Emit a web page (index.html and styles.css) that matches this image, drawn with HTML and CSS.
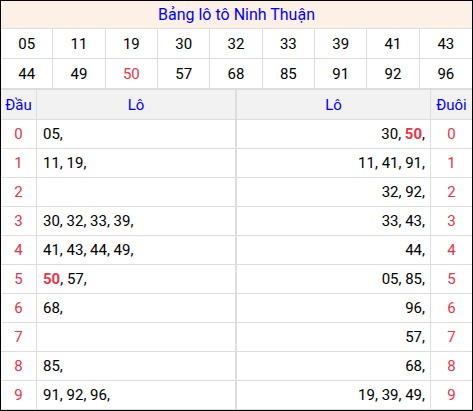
FILE: index.html
```html
<!DOCTYPE html>
<html lang="vi">
<head>
<meta charset="utf-8">
<title>Bảng lô tô Ninh Thuận</title>
<link rel="stylesheet" href="styles.css">
</head>
<body>
<div class="board">
  <div class="title">Bảng lô tô Ninh Thuận</div>
  <div class="nums">
    <div class="n">05</div><div class="n">11</div><div class="n">19</div><div class="n">30</div><div class="n">32</div><div class="n">33</div><div class="n">39</div><div class="n">41</div><div class="n">43</div>
    <div class="n">44</div><div class="n">49</div><div class="n red">50</div><div class="n">57</div><div class="n">68</div><div class="n">85</div><div class="n">91</div><div class="n">92</div><div class="n">96</div>
  </div>
  <div class="loto">
    <div class="h c1">Đầu</div><div class="h c2">Lô</div><div class="h c3">Lô</div><div class="h c4">Đuôi</div>

    <div class="d c1">0</div><div class="l c2">05,</div><div class="r c3">30, <b>50</b>,</div><div class="d c4">0</div>
    <div class="d c1">1</div><div class="l c2">11, 19,</div><div class="r c3">11, 41, 91,</div><div class="d c4">1</div>
    <div class="d c1">2</div><div class="l c2"></div><div class="r c3">32, 92,</div><div class="d c4">2</div>
    <div class="d c1">3</div><div class="l c2">30, 32, 33, 39,</div><div class="r c3">33, 43,</div><div class="d c4">3</div>
    <div class="d c1">4</div><div class="l c2">41, 43, 44, 49,</div><div class="r c3">44,</div><div class="d c4">4</div>
    <div class="d c1">5</div><div class="l c2"><b>50</b>, 57,</div><div class="r c3">05, 85,</div><div class="d c4">5</div>
    <div class="d c1">6</div><div class="l c2">68,</div><div class="r c3">96,</div><div class="d c4">6</div>
    <div class="d c1">7</div><div class="l c2"></div><div class="r c3">57,</div><div class="d c4">7</div>
    <div class="d c1">8</div><div class="l c2">85,</div><div class="r c3">68,</div><div class="d c4">8</div>
    <div class="d c1">9</div><div class="l c2">91, 92, 96,</div><div class="r c3">19, 39, 49,</div><div class="d c4">9</div>
  </div>
</div>
</body>
</html>
```

FILE: styles.css
```css
* { box-sizing: border-box; }
html, body { margin: 0; padding: 0; background: #fff; }
body {
  font-family: Roboto, "Liberation Sans", Arial, sans-serif;
  font-size: 15px;
  color: #000;
}
.board {
  width: 473px;
  height: 411px;
  border: 1px solid #000;
  overflow: hidden;
}
.title {
  height: 28px;
  background: #fdf1e7;
  border-bottom: 1px solid #ddd;
  color: #0000ff;
  font-size: 16px;
  display: flex;
  align-items: center;
  justify-content: center;
}
.nums {
  display: grid;
  grid-template-columns: repeat(9, 1fr);
}
.n {
  height: 30px;
  border-bottom: 1px solid #ddd;
  border-right: 1px solid #ddd;
  display: flex;
  align-items: center;
  justify-content: center;
}
.n:nth-child(9n) { border-right: none; }
.red { color: #e8334a; }
.loto {
  display: grid;
  grid-template-columns: 36px 200px 194px 41px;
  grid-template-rows: 30px;
  grid-auto-rows: 29px;
  border-top: 1px solid #ddd;
}
.loto > div {
  border-bottom: 1px solid #ddd;
  border-right: 1px solid #ddd;
  display: flex;
  align-items: center;
}
.loto > .c2 { border-right-width: 2px; }
.loto > .c4 { border-right: none; }
.h {
  background: #f2f2f2;
  color: #0000ff;
  justify-content: center;
}
.d {
  color: #e8334a;
  justify-content: center;
}
.l { padding-left: 6px; }
.r { justify-content: flex-end; padding-right: 5px; white-space: pre; }
.loto b { color: #e8334a; font-weight: 700; }
```
